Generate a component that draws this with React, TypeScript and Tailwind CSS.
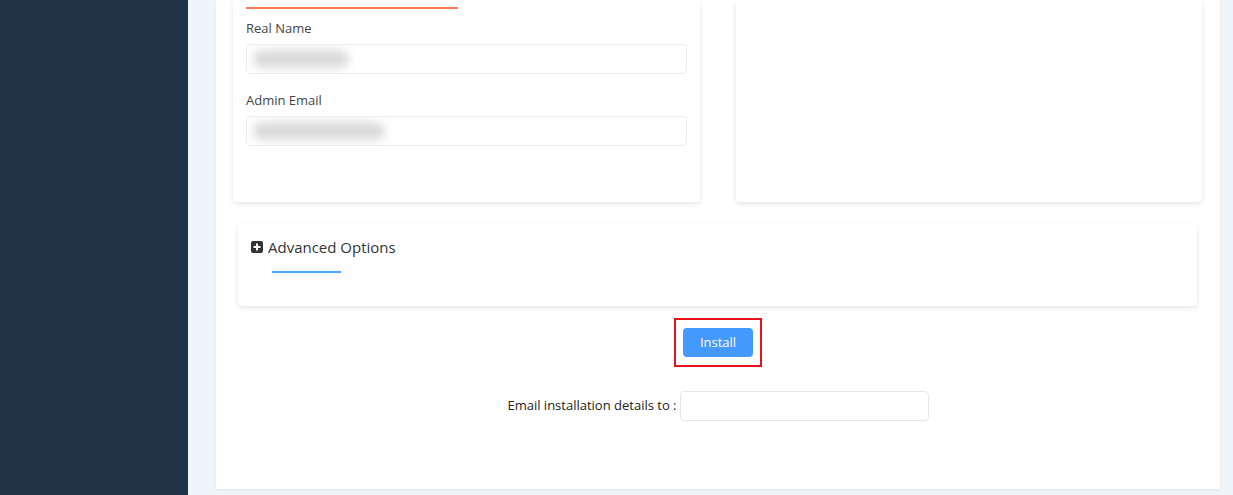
import React from "react";

function BlurField({ w }: { w: number }) {
  return (
    <div className="h-[30px] rounded-[4px] border border-[#ececec] bg-white flex items-center pl-[6px] overflow-hidden">
      <div className="h-[18px] rounded-full bg-[#dadada] blur-[5px]" style={{ width: w }} />
    </div>
  );
}

export default function App() {
  return (
    <div className="flex h-[495px] w-[1233px] overflow-hidden bg-[#f0f5fa]" style={{ fontFamily: '"Open Sans", "Noto Sans", sans-serif' }}>
      <aside className="w-[188px] shrink-0 bg-[#243447]" />
      <div className="flex-1 pl-[28px] pr-[13px] pb-[6px]">
        <div className="h-full bg-white shadow-[0_1px_3px_rgba(0,0,0,0.08)] flex flex-col">
          <div className="flex gap-[36px] pl-[17px] pr-[18px]">
            <div className="w-[467px] h-[202px] bg-white rounded-b-[4px] shadow-[0_2px_5px_rgba(0,0,0,0.1)] px-[13px] pt-[7px]">
              <div className="w-[212px] h-[2px] bg-[#ff7a50]" />
              <div className="mt-[10px] text-[13px] leading-[18px] text-[#444]">Real Name</div>
              <div className="mt-[7px] w-[441px]"><BlurField w={96} /></div>
              <div className="mt-[17px] text-[13px] leading-[18px] text-[#444]">Admin Email</div>
              <div className="mt-[7px] w-[441px]"><BlurField w={132} /></div>
            </div>
            <div className="w-[466px] h-[202px] bg-white rounded-b-[4px] shadow-[0_2px_5px_rgba(0,0,0,0.1)]" />
          </div>
          <div className="mt-[21px] ml-[22px] w-[959px] h-[83px] rounded-[4px] bg-white shadow-[0_2px_5px_rgba(0,0,0,0.1)] pl-[13px] pt-[14px]">
            <div className="flex items-center gap-[5px]">
              <svg width="12" height="12" viewBox="0 0 12 12">
                <rect x="0" y="0" width="12" height="12" rx="2" fill="#333" />
                <rect x="5" y="2.5" width="2" height="7" fill="#fff" />
                <rect x="2.5" y="5" width="7" height="2" fill="#fff" />
              </svg>
              <span className="text-[15px] leading-[20px] text-[#333]">Advanced Options</span>
            </div>
            <div className="mt-[14px] ml-[21px] w-[69px] h-[2px] bg-[#4da3ff]" />
          </div>
          <div className="mt-[12px] flex justify-center">
            <div className="border-2 border-[#e8111a] px-[7px] py-[8px]">
              <button className="w-[70px] h-[29px] rounded-[4px] bg-[#4499ff] text-white text-[13px]">Install</button>
            </div>
          </div>
          <div className="mt-[24px] flex justify-center items-center gap-[3px]">
            <span className="text-[13px] text-[#222]">Email installation details to :</span>
            <input className="w-[249px] h-[30px] rounded-[4px] border border-[#e6e6e6] bg-white" />
          </div>
        </div>
      </div>
    </div>
  );
}
